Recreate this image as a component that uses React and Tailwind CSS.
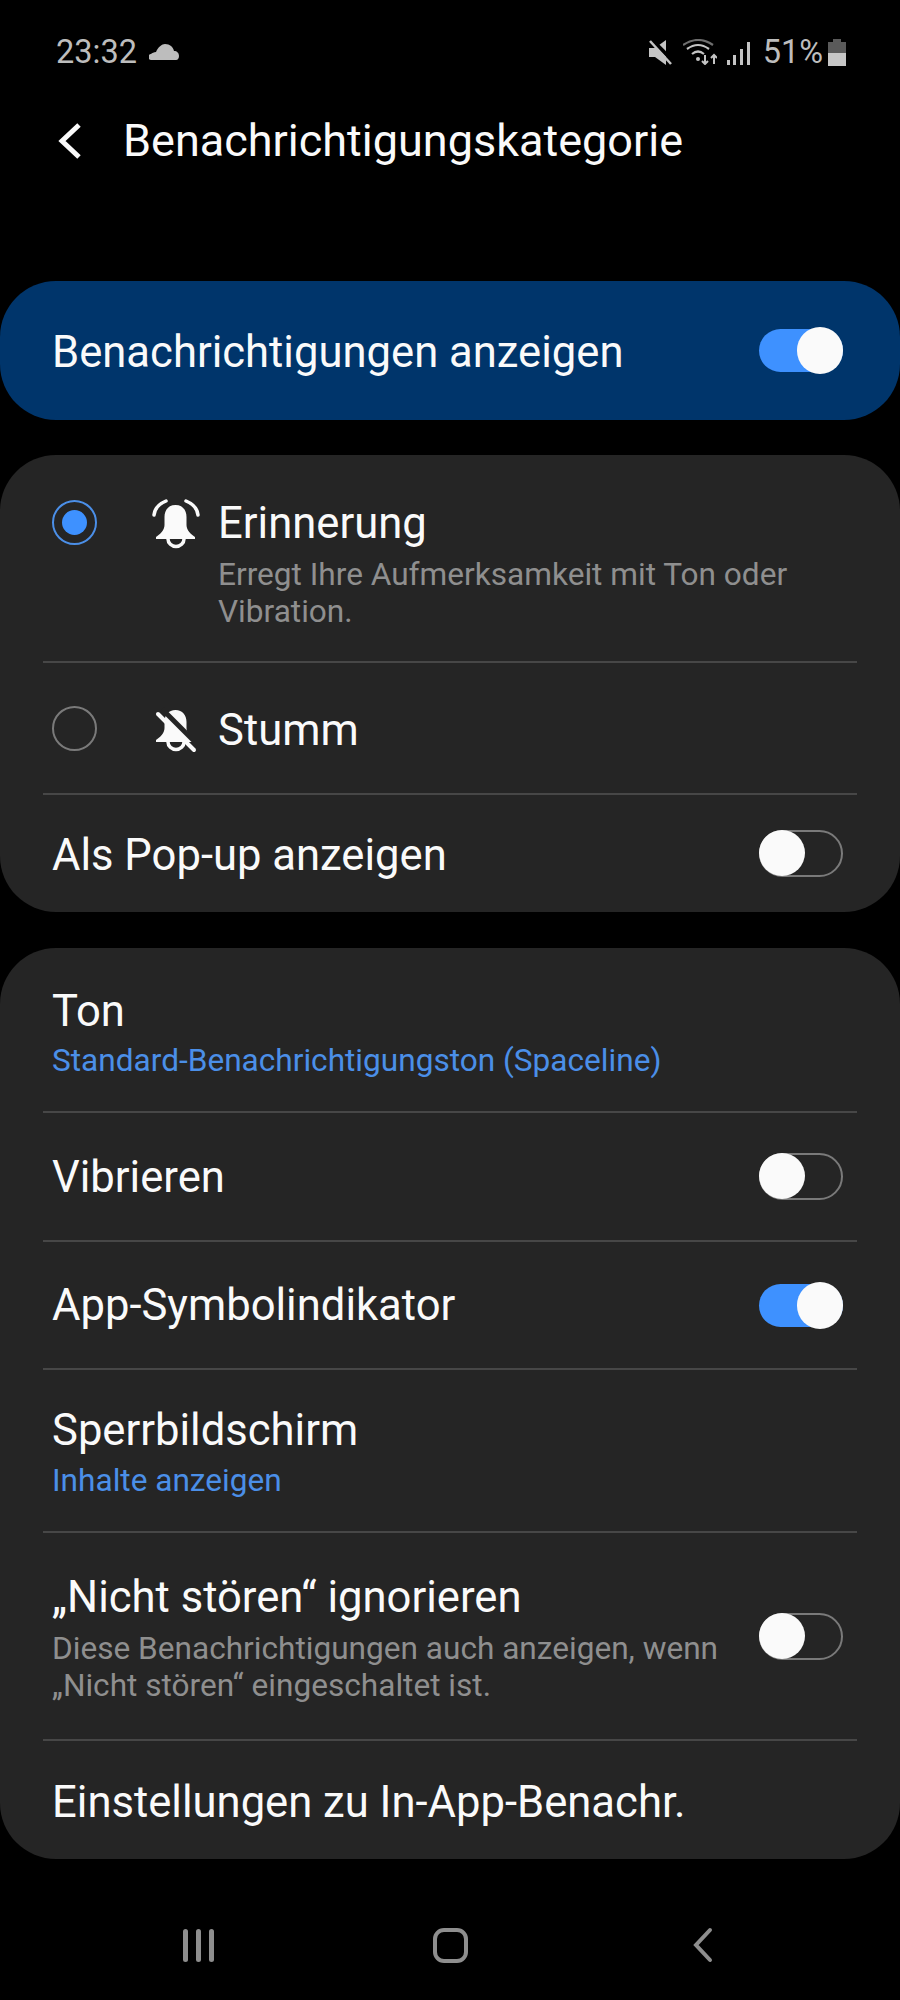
import React from "react";

const Toggle = ({ on }) => (
  <div className="relative w-[84px] h-[47px] shrink-0">
    {on ? (
      <div className="absolute inset-y-[2px] left-0 right-0 rounded-full bg-[#3e91ff]" />
    ) : (
      <div className="absolute inset-0 rounded-full border-2 border-[#7a7a7a]" />
    )}
    <div
      className={
        on
          ? "absolute right-0 top-0 w-[46px] h-[47px] rounded-full bg-[#fafafa]"
          : "absolute left-0 top-0 w-[46px] h-[46px] rounded-full bg-[#fafafa]"
      }
    />
  </div>
);

const Divider = () => <div className="mx-[43px] h-[2px] bg-[#474747]" />;

const Row = ({ h, pt = "pt-[5px]", title, children, right }) => (
  <div className={`flex items-center justify-between pl-[52px] pr-[57px] ${h}`}>
    <div className={`flex flex-col ${pt}`}>
      <div className="text-[43.6px] leading-[50px] text-[#fafafa]">{title}</div>
      {children}
    </div>
    {right}
  </div>
);

const BellRing = () => (
  <svg width="50" height="52" viewBox="0 0 50 52" fill="none">
    <path d="M24.5 8c-7 0-11 5-11 12v8c0 5-4 9-8.5 12v2h39v-2c-4.5-3-8.5-7-8.5-12v-8c0-7-4-12-11-12z" fill="#fafafa" />
    <path d="M17 42a8 7.5 0 0 0 16 0" stroke="#fafafa" strokeWidth="3.5" fill="none" />
    <path d="M3 18C3.5 12 8 7 15 4M47 18c-.5-6-5-11-12-14" stroke="#fafafa" strokeWidth="3.5" strokeLinecap="round" />
  </svg>
);

const BellOff = () => (
  <svg width="50" height="50" viewBox="0 0 50 50" fill="none">
    <path d="M24.5 6c-7 0-11 5-11 12v6c0 5-4 9-8.5 12v2h39v-2c-4.5-3-8.5-7-8.5-12v-6c0-7-4-12-11-12z" fill="#fafafa" />
    <path d="M17 38a8 7.5 0 0 0 16 0" stroke="#fafafa" strokeWidth="3.5" fill="none" />
    <path d="M11 5l36 36" stroke="#252525" strokeWidth="5" />
    <path d="M7 10l36 36" stroke="#fafafa" strokeWidth="4" strokeLinecap="round" />
  </svg>
);

const StatusIcons = () => (
  <div className="flex items-center text-[#bdbdbd]">
    <svg width="23" height="25" viewBox="0 0 23 25" className="mr-[11px]">
      <path d="M0 8h6l11-8v25L6 17H0z" fill="#c4c4c4" />
      <path d="M2 -1l24 24" stroke="#000" strokeWidth="4" />
      <path d="M1 1l21 23" stroke="#c4c4c4" strokeWidth="2.5" />
    </svg>
    <svg width="34" height="26" viewBox="0 0 34 26" fill="none" className="mr-[10px]">
      <path d="M0 6Q15 -4 30 6" stroke="#6e6e6e" strokeWidth="2.2" />
      <path d="M4 10Q15 2 26 10M9 15Q15 10 21 15" stroke="#c4c4c4" strokeWidth="2.2" />
      <circle cx="15" cy="20" r="2" fill="#c4c4c4" />
      <path d="M22 16v9M19 22l3 3 3-3M31 25v-9M28 19l3-3 3 3" stroke="#c4c4c4" strokeWidth="2" />
    </svg>
    <svg width="23" height="25" viewBox="0 0 23 25" className="mr-[13px]" fill="#c4c4c4">
      <rect x="0" y="20" width="3" height="5" />
      <rect x="6" y="15" width="3" height="10" />
      <rect x="13" y="9" width="3" height="16" />
      <rect x="20" y="2" width="3" height="23" />
    </svg>
    <span className="text-[32.5px] leading-[40px]">51%</span>
    <svg width="18" height="27" viewBox="0 0 18 27" className="ml-[5px]">
      <path d="M5 0h8v3h5v11H0V3h5z" fill="#5a5a5a" />
      <rect x="0" y="14" width="18" height="13" fill="#c6c6c6" />
    </svg>
  </div>
);

const App = () => {
  return (
    <div className="w-[900px] h-[2000px] bg-black flex flex-col font-['Roboto',sans-serif]">
      {/* status bar */}
      <div className="h-[104px] pl-[56px] pr-[54px] pt-[32px] flex justify-between items-start">
        <div className="flex items-center text-[#bdbdbd]">
          <span className="text-[32.5px] leading-[40px]">23:32</span>
          <svg width="30" height="18" viewBox="0 0 30 18" className="ml-[12px]" fill="#bdbdbd">
            <path d="M3 17a3 3 0 0 1-1-6c1-1 3-2 5-2 2-5 6-8 9-8 5 0 8 3 9 7 3 0 5 2 5 5 0 2-1 4-3 4z" />
          </svg>
        </div>
        <StatusIcons />
      </div>

      {/* header */}
      <div className="h-[72px] flex items-center pl-[58px] pt-[2px]">
        <svg width="24" height="38" viewBox="0 0 24 38" fill="none">
          <path d="M21 3L4 19l17 16" stroke="#fafafa" strokeWidth="5" />
        </svg>
        <h1 className="ml-[41px] text-[45px] leading-[50px] text-[#fafafa]">Benachrichtigungskategorie</h1>
      </div>

      {/* master switch */}
      <div className="mt-[105px] h-[139px] rounded-[56px] bg-[#00356b] flex items-center justify-between pl-[52px] pr-[57px]">
        <div className="pt-[5px] text-[43.6px] leading-[50px] text-[#fafafa]">Benachrichtigungen anzeigen</div>
        <Toggle on />
      </div>

      {/* importance card */}
      <div className="mt-[35px] h-[457px] rounded-[56px] bg-[#252525] flex flex-col">
        <div className="h-[206px] flex items-start pl-[52px] pt-[39px]">
          <div className="mt-[6px] w-[45px] h-[45px] rounded-full border-2 border-[#4b8fe8] flex items-center justify-center">
            <div className="w-[25px] h-[25px] rounded-full bg-[#3e91ff]" />
          </div>
          <div className="ml-[54px] mt-[3px] shrink-0"><BellRing /></div>
          <div className="ml-[17px] flex flex-col pt-[5px]">
            <div className="text-[43.6px] leading-[50px] text-[#fafafa]">Erinnerung</div>
            <div className="mt-[7px] w-[625px] text-[31.6px] leading-[37px] text-[#8f8f8f]">
              Erregt Ihre Aufmerksamkeit mit Ton oder Vibration.
            </div>
          </div>
        </div>
        <Divider />
        <div className="h-[130px] flex items-center pl-[52px]">
          <div className="w-[45px] h-[45px] rounded-full border-2 border-[#7a7a7a]" />
          <div className="ml-[54px] mt-[2px] shrink-0"><BellOff /></div>
          <div className="ml-[17px] pt-[5px] text-[43.6px] leading-[50px] text-[#fafafa]">Stumm</div>
        </div>
        <Divider />
        <Row h="flex-1" title="Als Pop-up anzeigen" right={<Toggle />} />
      </div>

      {/* settings card */}
      <div className="mt-[36px] h-[911px] rounded-[56px] bg-[#252525] flex flex-col">
        <Row h="h-[163px]" pt="pt-[10px]" title="Ton">
          <div className="mt-[2px] text-[31.6px] leading-[44px] text-[#4b8fe8]">Standard-Benachrichtigungston (Spaceline)</div>
        </Row>
        <Divider />
        <Row h="h-[127px]" pt="pt-[2px]" title="Vibrieren" right={<Toggle />} />
        <Divider />
        <Row h="h-[126px]" pt="pt-[2px]" title="App-Symbolindikator" right={<Toggle on />} />
        <Divider />
        <Row h="h-[161px]" pt="pt-[7px]" title="Sperrbildschirm">
          <div className="mt-[3px] text-[31.6px] leading-[44px] text-[#4b8fe8]">Inhalte anzeigen</div>
        </Row>
        <Divider />
        <Row
          h="h-[206px]"
          title="„Nicht stören“ ignorieren"
          right={<Toggle />}
        >
          <div className="mt-[7px] w-[680px] text-[31.6px] leading-[37px] text-[#8f8f8f]">
            Diese Benachrichtigungen auch anzeigen, wenn „Nicht stören“ eingeschaltet ist.
          </div>
        </Row>
        <Divider />
        <Row h="flex-1" title="Einstellungen zu In-App-Benachr." />
      </div>

      {/* nav bar */}
      <div className="flex-1 flex items-center pl-[183px] pt-[31px]">
        <div className="flex gap-[8px]">
          <div className="w-[5px] h-[33px] rounded-full bg-[#8e8e8e]" />
          <div className="w-[5px] h-[33px] rounded-full bg-[#8e8e8e]" />
          <div className="w-[5px] h-[33px] rounded-full bg-[#8e8e8e]" />
        </div>
        <div className="ml-[219px] w-[35px] h-[35px] rounded-[11px] border-[4px] border-[#8e8e8e]" />
        <svg width="20" height="36" viewBox="0 0 20 36" fill="none" className="ml-[225px]">
          <path d="M17 3L3 18l14 15" stroke="#8e8e8e" strokeWidth="4" strokeLinecap="round" />
        </svg>
      </div>
    </div>
  );
};

export default App;
